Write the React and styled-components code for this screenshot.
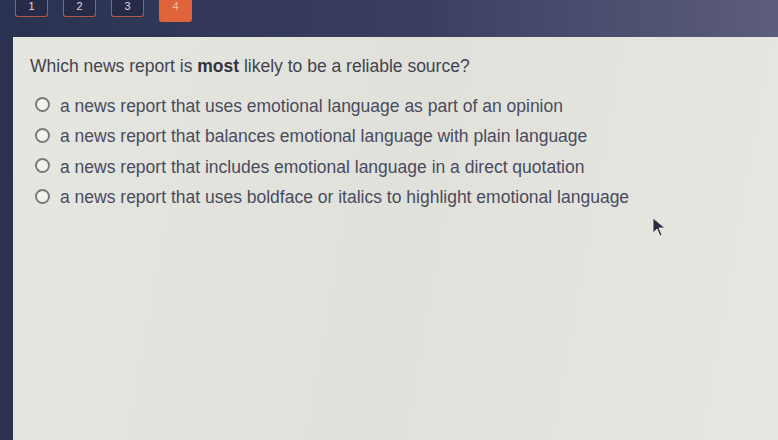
import styled, { createGlobalStyle } from 'styled-components';

const GlobalStyle = createGlobalStyle`
	html, body {
		margin: 0;
		padding: 0;
		width: 778px;
		height: 440px;
		overflow: hidden;
		background: #2c3250;
	}
`;

const questions = [
	'a news report that uses emotional language as part of an opinion',
	'a news report that balances emotional language with plain language',
	'a news report that includes emotional language in a direct quotation',
	'a news report that uses boldface or italics to highlight emotional language',
];

function App() {
	return (
		<Screen>
			<GlobalStyle />
			<TopBar>
				<Tab>1</Tab>
				<Tab>2</Tab>
				<Tab>3</Tab>
				<Tab active>4</Tab>
			</TopBar>
			<Panel>
				<Question>
					Which news report is <b>most</b> likely to be a reliable source?
				</Question>
				<Options>
					{questions.map((q) => (
						<Option key={q}>
							<Radio />
							<span>{q}</span>
						</Option>
					))}
				</Options>
				<Cursor viewBox="0 0 14 20" width="14" height="20">
					<path d="M1 1 L1 16 L5 12 L8 19 L10 18 L7 11 L13 11 Z" fill="#2a2d40" stroke="#f2f2ee" strokeWidth="0.8" />
				</Cursor>
			</Panel>
		</Screen>
	);
}

export default App;

const Screen = styled.div`
	width: 778px;
	height: 440px;
	display: flex;
	flex-direction: column;
	background: linear-gradient(90deg, #2b3150 0%, #3a3f60 55%, #5d5d7d 100%);
	font-family: 'Liberation Sans', Arial, sans-serif;
	overflow: hidden;
`;

const TopBar = styled.div`
	height: 37px;
	display: flex;
	align-items: flex-start;
	gap: 15px;
	padding-left: 15px;
	flex-shrink: 0;
`;

const Tab = styled.div`
	width: 33px;
	height: ${(p) => (p.active ? '22px' : '17px')};
	border: ${(p) => (p.active ? 'none' : '1.5px solid #b85548')};
	border-top: none;
	border-radius: 0 0 3px 3px;
	background: ${(p) => (p.active ? '#e0643a' : '#262c48')};
	color: ${(p) => (p.active ? '#f3b9a0' : '#d8dbe6')};
	font-size: 11px;
	display: flex;
	align-items: flex-start;
	justify-content: center;
	padding-top: 1px;
	box-sizing: border-box;
	line-height: 11px;
`;

const Panel = styled.div`
	position: relative;
	flex: 1;
	margin-left: 13px;
	background: linear-gradient(100deg, #e6e6e0 0%, #e1e1db 50%, #e7e7e2 100%);
	padding: 19px 0 0 17px;
`;

const Question = styled.div`
	font-size: 17.5px;
	color: #41434f;
	margin-bottom: 19px;

	b {
		color: #33343c;
	}
`;

const Options = styled.div`
	display: flex;
	flex-direction: column;
	gap: 10px;
	padding-left: 2px;
`;

const Option = styled.div`
	display: flex;
	align-items: center;
	gap: 10px;
	font-size: 17.5px;
	color: #494b5e;
	height: 20.5px;
`;

const Radio = styled.span`
	width: 11px;
	height: 11px;
	border: 2px solid #7a7a7c;
	border-radius: 50%;
	background: #f2f2ee;
	flex-shrink: 0;
	margin-left: 3px;
	margin-top: -3px;
`;

const Cursor = styled.svg`
	position: absolute;
	left: 639px;
	top: 180px;
`;
